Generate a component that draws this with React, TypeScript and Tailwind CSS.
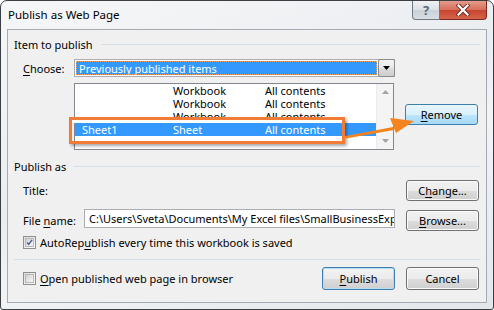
import type { ReactNode } from 'react';

const font = "font-['Noto_Sans',_'Liberation_Sans',_sans-serif]";

function U({ children }: { children: string }) {
  return <span className="underline underline-offset-[2px] decoration-1">{children}</span>;
}

function Button({ children, tone = 'normal', h = 'h-[21px]' }: { children: ReactNode; tone?: 'normal' | 'focus' | 'default'; h?: string }) {
  const look =
    tone === 'focus'
      ? 'border-[#3c7fb1] bg-[linear-gradient(#eaf6fd_0%,#d9f0fc_50%,#bee6fd_51%,#a7d9f5_100%)]'
      : tone === 'default'
        ? 'border-[#3c7fb1] bg-[linear-gradient(#f2f2f2_0%,#ebebeb_50%,#dddddd_51%,#cfcfcf_100%)] shadow-[inset_0_0_0_1px_#b6dcf3]'
        : 'border-[#707070] bg-[linear-gradient(#f2f2f2_0%,#ebebeb_50%,#dddddd_51%,#cfcfcf_100%)] shadow-[inset_0_0_0_1px_#fbfbfb]';
  return (
    <div className={`w-[73px] ${h} shrink-0 rounded-[3px] border flex items-center justify-center text-[11px] text-black ${look}`}>
      {children}
    </div>
  );
}

function Checkbox({ checked }: { checked?: boolean }) {
  return (
    <div className="w-[13px] h-[13px] shrink-0 border border-[#8e8f8f] bg-[linear-gradient(135deg,#dcdcdc,#fdfdfd)] flex items-center justify-center">
      <div className="w-[9px] h-[9px] border border-[#b8b8b8] bg-[linear-gradient(135deg,#d0d0d0,#f8f8f8)] flex items-center justify-center">
        {checked && (
          <svg width="9" height="9" viewBox="0 0 9 9">
            <path d="M1.5 4.5 L3.5 7 L7.8 1.2" fill="none" stroke="#4a5f97" strokeWidth="1.8" />
          </svg>
        )}
      </div>
    </div>
  );
}

function Section({ label }: { label: string }) {
  return (
    <div className="h-[14px] flex items-center pl-[6px] pr-[6px] gap-[8px]">
      <span className="leading-none text-black">{label}</span>
      <div className="flex-1 h-px bg-[#d5dfe5]" />
    </div>
  );
}

const rows = [
  { a: '', b: 'Workbook', c: 'All contents' },
  { a: '', b: 'Workbook', c: 'All contents' },
  { a: '', b: 'Workbook', c: 'All contents' },
  { a: 'Sheet1', b: 'Sheet', c: 'All contents', sel: true },
];

export default function App() {
  return (
    <div className={`${font} w-[494px] h-[310px] relative flex flex-col border border-[#3a3f44] rounded-t-[7px] rounded-b-[3px] bg-[linear-gradient(160deg,#f6f7f9_0%,#eaedf0_45%,#f1f3f5_60%,#e3e7eb_100%)] overflow-hidden`}>
      {/* title bar */}
      <div className="h-[28px] flex items-start shrink-0">
        <span className="pl-[7px] pt-[8px] text-[11.5px] text-black leading-none">Publish as Web Page</span>
        <div className="ml-auto mr-[6px] flex -mt-px">
          <div className="w-[28px] h-[20px] rounded-bl-[4px] border border-[#6f7880] border-t-0 bg-[linear-gradient(#f2f4f6_0%,#dce1e6_50%,#c8cfd6_51%,#d8dee4_100%)] flex items-center justify-center">
            <span className="text-[13px] leading-none text-[#5c6670] font-bold mt-[1px]">?</span>
          </div>
          <div className="w-[47px] h-[20px] rounded-br-[4px] border border-[#7a2a22] border-t-0 border-l-0 bg-[linear-gradient(#e8a090_0%,#d8705d_50%,#c7432e_51%,#d5634a_100%)] flex items-center justify-center">
            <svg width="14" height="12" viewBox="0 0 14 12">
              <path d="M2.5 1.5 L11.5 10.5 M11.5 1.5 L2.5 10.5" stroke="#6b2a22" strokeWidth="4" strokeLinecap="square" />
              <path d="M2.5 1.5 L11.5 10.5 M11.5 1.5 L2.5 10.5" stroke="#ffffff" strokeWidth="2.2" strokeLinecap="square" />
            </svg>
          </div>
        </div>
      </div>

      {/* client area */}
      <div className="mx-[6px] h-[274px] shrink-0 border border-[#a3acb5] bg-[#f0f0f0] flex flex-col text-[11px] text-black leading-none">
        <div className="mt-[7px]">
          <Section label="Item to publish" />
        </div>

        <div className="mt-[8px] h-[18px] flex items-center pl-[15px]">
          <span className="w-[51px]">
            <U>C</U>hoose:
          </span>
          <div className="w-[321px] h-[18px] flex border border-[#abadb3] bg-white">
            <div className="flex-1 p-[1px]">
              <div className="h-full bg-[#3399ff] outline-1 outline-dotted outline-[#f0a060] -outline-offset-1 text-white flex items-center pl-[3px]">
                Previously published items
              </div>
            </div>
            <div className="w-[17px] -my-px -mr-px rounded-[2px] border border-[#8a8a8a] bg-[linear-gradient(#f4f4f4_0%,#e8e8e8_50%,#dcdcdc_51%,#cdcdcd_100%)] flex items-center justify-center">
              <svg width="7" height="4" viewBox="0 0 7 4">
                <path d="M0 0 H7 L3.5 4 Z" fill="#000" />
              </svg>
            </div>
          </div>
        </div>

        <div className="mt-[6px] h-[67px] flex pl-[66px]">
          <div className="w-[320px] h-[67px] border border-[#828790] bg-white flex">
            <div className="flex-1 flex flex-col">
              {rows.map((r, i) => (
                <div key={i} className={`h-[13px] flex items-center ${r.sel ? 'bg-[#3399ff] text-white' : ''}`}>
                  <span className="w-[98px] pl-[7px]">{r.a}</span>
                  <span className="w-[92px]">{r.b}</span>
                  <span>{r.c}</span>
                </div>
              ))}
            </div>
            <div className="w-[17px] bg-[#f4f4f4] border-l border-[#ececec] flex flex-col items-center justify-between py-[6px]">
              <svg width="7" height="4" viewBox="0 0 7 4">
                <path d="M0 4 H7 L3.5 0 Z" fill="#a3a3a3" />
              </svg>
              <svg width="7" height="4" viewBox="0 0 7 4">
                <path d="M0 0 H7 L3.5 4 Z" fill="#a3a3a3" />
              </svg>
            </div>
          </div>
          <div className="ml-[11px] mt-[21px]">
            <Button tone="focus">
              <span>
                <U>R</U>emove
              </span>
            </Button>
          </div>
        </div>

        <div className="mt-[9px]">
          <Section label="Publish as" />
        </div>

        <div className="mt-[7px] h-[21px] flex items-center pl-[15px] pr-[7px]">
          <span>Title:</span>
          <div className="ml-auto">
            <Button>
              <span>
                C<U>h</U>ange...
              </span>
            </Button>
          </div>
        </div>

        <div className="mt-[8px] h-[22px] flex pl-[15px] pr-[7px]">
          <span className="w-[61px] self-center mt-[1px]">
            File <U>n</U>ame:
          </span>
          <div className="w-[311px] h-[19px] border border-[#abadb3] bg-white flex items-center pl-[4px] overflow-hidden whitespace-nowrap">
            C:\Users\Sveta\Documents\My Excel files\SmallBusinessExpe
          </div>
          <div className="ml-auto mt-[1px]">
            <Button>
              <span>
                <U>B</U>rowse...
              </span>
            </Button>
          </div>
        </div>

        <div className="mt-[5px] h-[13px] flex items-center pl-[15px] gap-[4px]">
          <Checkbox checked />
          <span>
            AutoRep<U>u</U>blish every time this workbook is saved
          </span>
        </div>

        <div className="mt-[10px] h-px mx-[6px] bg-[#d5dfe5]" />

        <div className="mt-[7px] h-[23px] flex items-center pl-[15px] pr-[7px]">
          <Checkbox />
          <span className="ml-[4px]">
            <U>O</U>pen published web page in browser
          </span>
          <div className="ml-auto flex gap-[11px]">
            <Button tone="default" h="h-[23px]">
              <span>
                <U>P</U>ublish
              </span>
            </Button>
            <Button h="h-[23px]">Cancel</Button>
          </div>
        </div>
      </div>

      {/* callout overlay: highlight box + arrow */}
      <div className="absolute left-[68px] top-[116px] w-[276px] h-[27px] border-[3px] border-[#f27b35] shadow-[inset_0_3px_0_#ffffff,2px_2px_3px_rgba(0,0,0,0.35)]" />
      <svg className="absolute left-[340px] top-[108px]" width="80" height="36" viewBox="0 0 80 36">
        <path d="M2 30 L2 27.5 L52 18 L53 21 Z" fill="#f5841f" />
        <path d="M49 9 L73 12 L55 24 Z" fill="#f5841f" />
      </svg>
    </div>
  );
}
